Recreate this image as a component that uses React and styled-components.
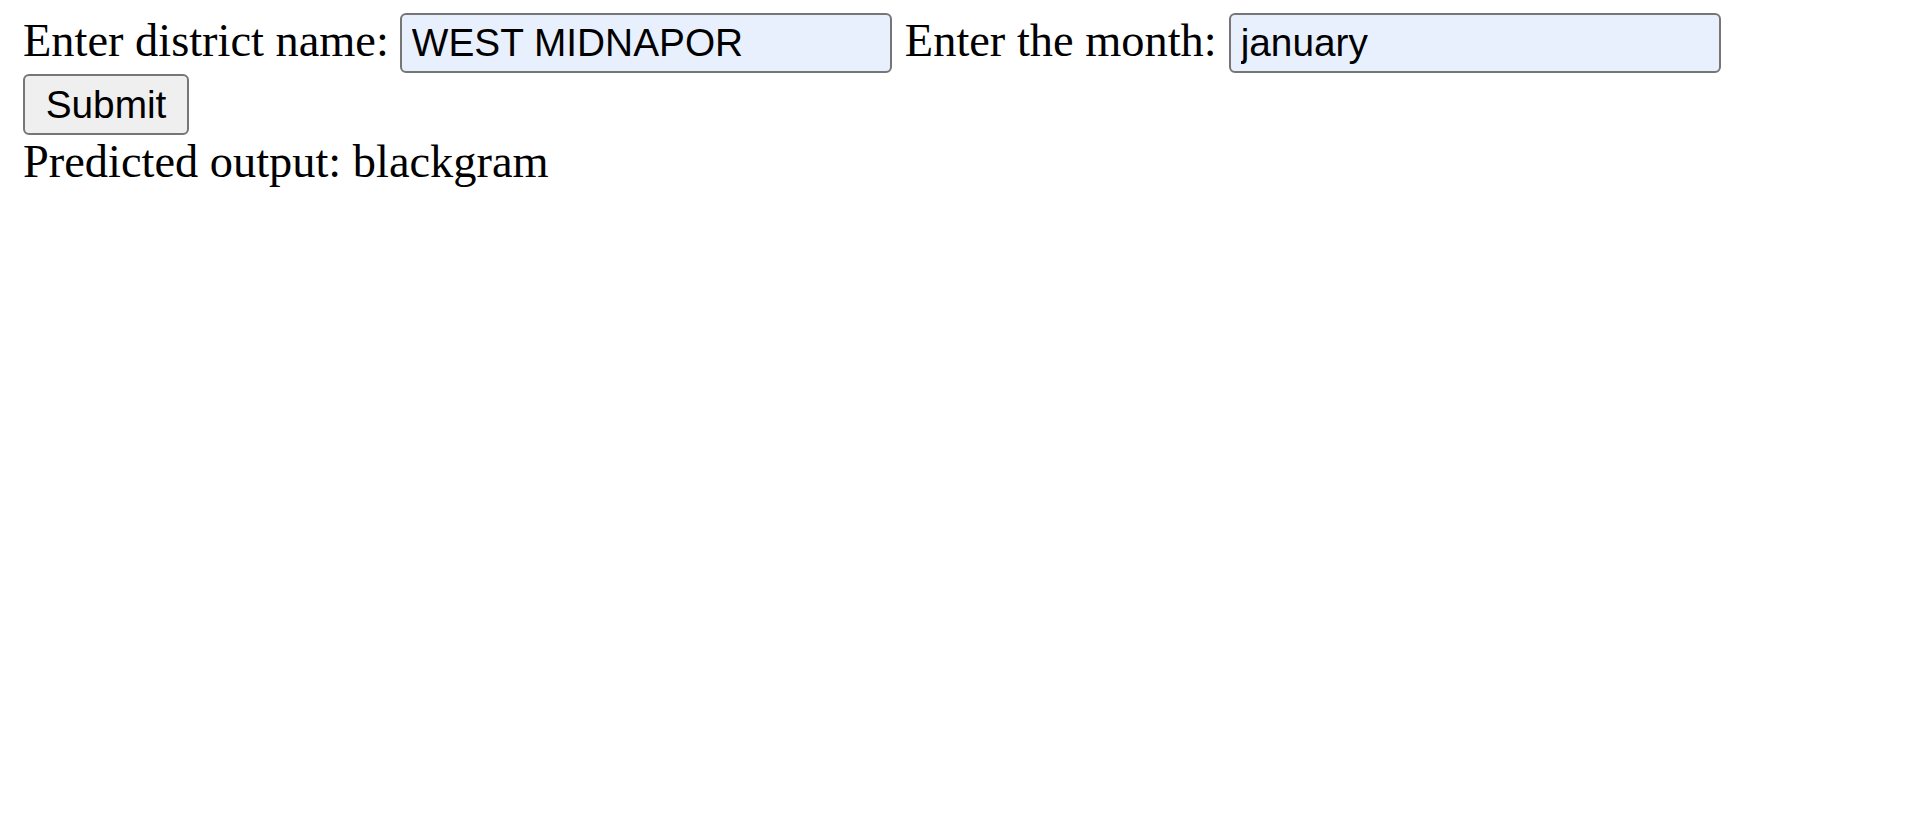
import React from "react";
import styled, { createGlobalStyle } from "styled-components";

const Global = createGlobalStyle`
  html, body {
    margin: 0;
    padding: 0;
    background: #ffffff;
  }
  body {
    font-family: "Liberation Serif", "Times New Roman", serif;
    color: #000000;
  }
`;

const Page = styled.main`
  padding: 13px 0 0 23px;
  font-size: 46.4px;
  line-height: normal;
`;

const FieldRow = styled.form`
  display: flex;
  align-items: baseline;
  margin: 0;
`;

const Label = styled.label`
  font-family: "Liberation Serif", "Times New Roman", serif;
  font-size: 46.4px;
  margin-right: ${(p) => p.$gap}px;
  margin-left: ${(p) => p.$lead || 0}px;
  white-space: nowrap;
`;

const TextInput = styled.input`
  box-sizing: border-box;
  width: 492px;
  height: 60px;
  padding: 0 10px;
  border: 2px solid #767676;
  border-radius: 6px;
  background: #e8f0fe;
  font-family: "Liberation Sans", Arial, sans-serif;
  font-size: 38.8px;
  color: #000000;
  outline: none;
`;

const ButtonRow = styled.div`
  display: flex;
  padding-top: 1px;
`;

const SubmitButton = styled.button`
  box-sizing: border-box;
  width: 166px;
  height: 61px;
  padding: 0 18px;
  border: 2px solid #767676;
  border-radius: 6px;
  background: #efefef;
  font-family: "Liberation Sans", Arial, sans-serif;
  font-size: 38.8px;
  color: #000000;
  cursor: pointer;
`;

const Output = styled.p`
  margin: 0;
  font-size: 46.4px;
  line-height: normal;
`;

export default function App() {
  return (
    <>
      <Global />
      <Page>
        <FieldRow onSubmit={(e) => e.preventDefault()}>
          <Label $gap={11} htmlFor="district">Enter district name:</Label>
          <TextInput id="district" defaultValue="WEST MIDNAPOR" />
          <Label $gap={12} $lead={13} htmlFor="month">Enter the month:</Label>
          <TextInput id="month" defaultValue="january" />
        </FieldRow>
        <ButtonRow>
          <SubmitButton type="button">Submit</SubmitButton>
        </ButtonRow>
        <Output>Predicted output: blackgram</Output>
      </Page>
    </>
  );
}
